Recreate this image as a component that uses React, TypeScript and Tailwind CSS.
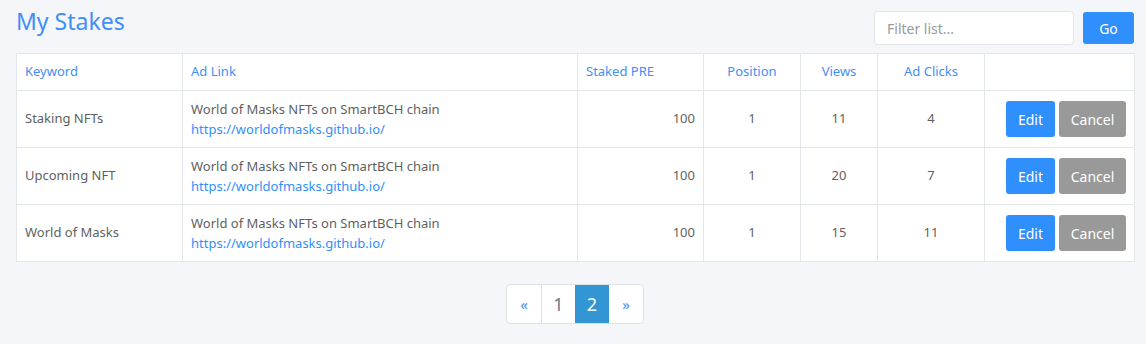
import React from "react";

const rows = [
  { keyword: "Staking NFTs", views: 11, clicks: 4 },
  { keyword: "Upcoming NFT", views: 20, clicks: 7 },
  { keyword: "World of Masks", views: 15, clicks: 11 },
];

export default function App() {
  return (
    <div className="min-h-[344px] bg-[#f4f6f9] pl-4 pr-3 pt-[6px] font-['Segoe_UI','Noto_Sans',sans-serif] text-[14px] text-[#5f5f5f]">
      <div className="flex items-start justify-between">
        <h1 className="text-[23px] leading-[30px] text-[#3f8ff7]">My Stakes</h1>
        <div className="mt-[5px] flex items-center gap-[9px]">
          <input
            className="h-[34px] w-[200px] rounded-[4px] border border-[#e3e6ea] bg-white px-3 text-[14px] text-[#555] outline-none placeholder:text-[#999]"
            placeholder="Filter list..."
          />
          <button className="h-[32px] w-[51px] rounded-[3px] bg-[#2f8ffc] text-[14px] text-white">Go</button>
        </div>
      </div>

      <table className="mt-[8px] w-[1118px] table-fixed border-collapse bg-white">
        <colgroup>
          <col className="w-[166px]" />
          <col className="w-[395px]" />
          <col className="w-[126px]" />
          <col className="w-[97px]" />
          <col className="w-[77px]" />
          <col className="w-[107px]" />
          <col className="w-[150px]" />
        </colgroup>
        <thead>
          <tr className="h-[37px] text-[13px] text-[#3f8ff7]">
            <th className="border border-[#e3e6ea] px-2 text-left font-normal">Keyword</th>
            <th className="border border-[#e3e6ea] px-2 text-left font-normal">Ad Link</th>
            <th className="border border-[#e3e6ea] px-2 text-left font-normal">Staked PRE</th>
            <th className="border border-[#e3e6ea] px-2 text-center font-normal">Position</th>
            <th className="border border-[#e3e6ea] px-2 text-center font-normal">Views</th>
            <th className="border border-[#e3e6ea] px-2 text-center font-normal">Ad Clicks</th>
            <th className="border border-[#e3e6ea] px-2"></th>
          </tr>
        </thead>
        <tbody>
          {rows.map((r) => (
            <tr key={r.keyword} className="h-[57px] text-[13px]">
              <td className="border border-[#e3e6ea] px-2">{r.keyword}</td>
              <td className="border border-[#e3e6ea] px-2 leading-[20px]">
                <div>World of Masks NFTs on SmartBCH chain</div>
                <a className="text-[#2f8ffc]" href="#">https://worldofmasks.github.io/</a>
              </td>
              <td className="border border-[#e3e6ea] px-2 text-right">100</td>
              <td className="border border-[#e3e6ea] px-2 text-center">1</td>
              <td className="border border-[#e3e6ea] px-2 text-center">{r.views}</td>
              <td className="border border-[#e3e6ea] px-2 text-center">{r.clicks}</td>
              <td className="border border-[#e3e6ea] px-2">
                <div className="flex justify-end gap-[4px]">
                  <button className="h-[36px] w-[49px] rounded-[3px] bg-[#2f8ffc] text-[14px] text-white">Edit</button>
                  <button className="h-[36px] w-[67px] rounded-[3px] bg-[#999] text-[14px] text-white">Cancel</button>
                </div>
              </td>
            </tr>
          ))}
        </tbody>
      </table>

      <div className="mt-[22px] flex justify-center">
        <div className="flex h-[40px] overflow-hidden rounded-[4px] border border-[#dee2e6] bg-white text-[18px]">
          <span className="flex w-[34px] items-center justify-center text-[15px] text-[#3f8ff7]">«</span>
          <span className="flex w-[34px] items-center justify-center border-l border-[#dee2e6] text-[#6b7a8c]">1</span>
          <span className="flex w-[34px] items-center justify-center bg-[#3196d3] text-white">2</span>
          <span className="flex w-[34px] items-center justify-center text-[15px] text-[#3f8ff7]">»</span>
        </div>
      </div>
    </div>
  );
}
